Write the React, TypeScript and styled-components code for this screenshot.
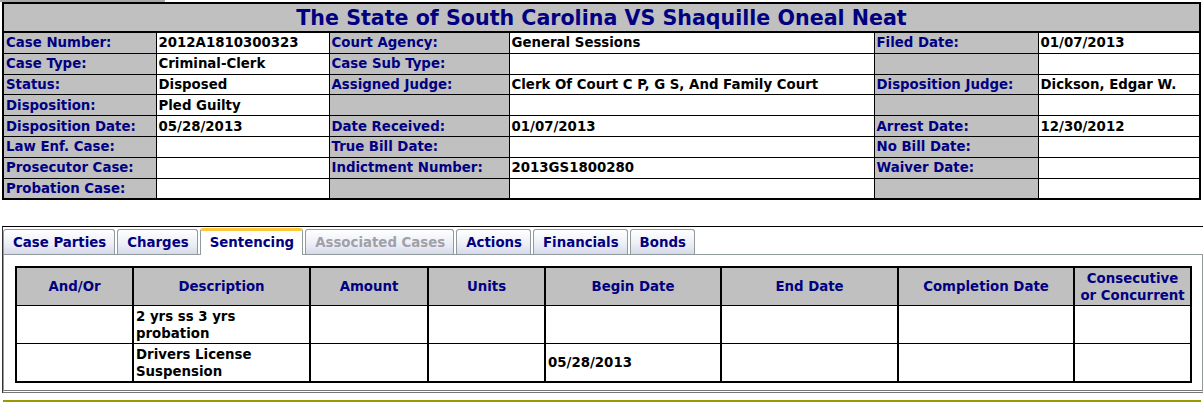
import styled, { createGlobalStyle, css } from 'styled-components';

const GlobalStyle = createGlobalStyle`
  body {
    margin: 0;
    background: #ffffff;
    font-family: "DejaVu Sans", Verdana, sans-serif;
    font-size: 13.33px;
    font-weight: bold;
  }
`;

const TopStrip = styled.div`
  width: 165px;
  height: 2px;
  background: #a8a8a8;
`;

const CaseTable = styled.table`
  width: 1199px;
  margin-left: 2px;
  border-collapse: collapse;
  border: 2px solid #000;
  table-layout: fixed;
`;

const Col = styled.col<{ $w: number }>`
  width: ${(p) => p.$w}px;
`;

const TitleCell = styled.th`
  background: #c0c0c0;
  color: #000080;
  font-size: 20.6px;
  height: 27px;
  padding: 0;
  border-bottom: 2px solid #000;
  text-align: center;
  vertical-align: middle;
`;

const Cell = styled.td<{ $label?: boolean }>`
  height: 19.8px;
  padding: 0 2px;
  border: 1px solid #000;
  white-space: nowrap;
  overflow: hidden;
  vertical-align: middle;
  ${(p) =>
    p.$label
      ? css`
          background: #c0c0c0;
          color: #000080;
        `
      : css`
          background: #fff;
          color: #000;
        `}
`;

const TabArea = styled.div`
  margin-top: 26px;
  margin-left: 2px;
  border-top: 1px solid #000;
  border-left: 1px solid #333;
  padding-top: 1px;
`;

const TabList = styled.div`
  display: flex;
  align-items: flex-end;
  gap: 2px;
  height: 26px;
`;

const Tab = styled.div<{ $active?: boolean; $disabled?: boolean }>`
  height: 25px;
  box-sizing: border-box;
  padding: 5px 8px 0 9px;
  border: 1px solid #919b9c;
  border-bottom: none;
  border-radius: 3px 3px 0 0;
  background: linear-gradient(#ffffff, #eceef6 60%, #d6d9e8);
  color: ${(p) => (p.$disabled ? '#a0a0a8' : '#000080')};
  white-space: nowrap;
  ${(p) =>
    p.$active &&
    css`
      height: 27px;
      background: #fff;
      border-top: 3px solid #ffc83c;
      padding-top: 4px;
      position: relative;
      margin-bottom: -1px;
      z-index: 1;
    `}
`;

const Panel = styled.div`
  border: 1px solid #919b9c;
  border-bottom: 3px double #777;
  padding: 11px 11px 7px 11px;
`;

const SentTable = styled.table`
  width: 1175px;
  border-collapse: collapse;
  border: 2px solid #000;
  table-layout: fixed;
`;

const HeadCell = styled.th`
  background: #c0c0c0;
  color: #000080;
  height: 37px;
  padding: 0 2px;
  border-left: 2px solid #000;
  border-bottom: 1px solid #000;
  text-align: center;
  vertical-align: middle;
  line-height: 17px;
`;

const BodyCell = styled.td`
  height: 37px;
  padding: 0 2px;
  border-left: 2px solid #000;
  border-top: 1px solid #000;
  color: #000;
  vertical-align: middle;
  line-height: 17px;
`;

const Footer = styled.div`
  margin: 7px 2px 0 3px;
  height: 8px;
  border-top: 2px solid #999900;
  border-left: 1px solid #999900;
  border-right: 1px solid #999900;
`;

const caseCols = [153, 173, 180, 365, 164, 162];

const rows: [string, string, string, string, string, string][] = [
  ['Case Number:', '2012A1810300323', 'Court Agency:', 'General Sessions', 'Filed Date:', '01/07/2013'],
  ['Case Type:', 'Criminal-Clerk', 'Case Sub Type:', '', '', ''],
  ['Status:', 'Disposed', 'Assigned Judge:', 'Clerk Of Court C P, G S, And Family Court', 'Disposition Judge:', 'Dickson, Edgar W.'],
  ['Disposition:', 'Pled Guilty', '', '', '', ''],
  ['Disposition Date:', '05/28/2013', 'Date Received:', '01/07/2013', 'Arrest Date:', '12/30/2012'],
  ['Law Enf. Case:', '', 'True Bill Date:', '', 'No Bill Date:', ''],
  ['Prosecutor Case:', '', 'Indictment Number:', '2013GS1800280', 'Waiver Date:', ''],
  ['Probation Case:', '', '', '', '', ''],
];

const tabs = [
  { name: 'Case Parties' },
  { name: 'Charges' },
  { name: 'Sentencing', active: true },
  { name: 'Associated Cases', disabled: true },
  { name: 'Actions' },
  { name: 'Financials' },
  { name: 'Bonds' },
];

const sentCols = [117, 177, 118, 117, 176, 177, 176, 117];
const sentHeads = ['And/Or', 'Description', 'Amount', 'Units', 'Begin Date', 'End Date', 'Completion Date', 'Consecutive or Concurrent'];
const sentRows = [
  ['', '2 yrs ss 3 yrs probation', '', '', '', '', '', ''],
  ['', 'Drivers License Suspension', '', '', '05/28/2013', '', '', ''],
];

const App = () => {
  return (
    <>
      <GlobalStyle />
      <TopStrip />
      <CaseTable>
        <colgroup>
          {caseCols.map((w, i) => (
            <Col key={i} $w={w} />
          ))}
        </colgroup>
        <thead>
          <tr>
            <TitleCell colSpan={6}>The State of South Carolina VS Shaquille Oneal Neat</TitleCell>
          </tr>
        </thead>
        <tbody>
          {rows.map((r, i) => (
            <tr key={i}>
              {r.map((v, j) => (
                <Cell key={j} $label={j % 2 === 0}>
                  {v}
                </Cell>
              ))}
            </tr>
          ))}
        </tbody>
      </CaseTable>

      <TabArea>
        <TabList>
          {tabs.map((t) => (
            <Tab key={t.name} $active={t.active} $disabled={t.disabled}>
              {t.name}
            </Tab>
          ))}
        </TabList>
        <Panel>
          <SentTable>
            <colgroup>
              {sentCols.map((w, i) => (
                <Col key={i} $w={w} />
              ))}
            </colgroup>
            <thead>
              <tr>
                {sentHeads.map((h) => (
                  <HeadCell key={h}>{h}</HeadCell>
                ))}
              </tr>
            </thead>
            <tbody>
              {sentRows.map((r, i) => (
                <tr key={i}>
                  {r.map((v, j) => (
                    <BodyCell key={j}>{v}</BodyCell>
                  ))}
                </tr>
              ))}
            </tbody>
          </SentTable>
        </Panel>
      </TabArea>
      <Footer />
    </>
  );
};

export default App;
